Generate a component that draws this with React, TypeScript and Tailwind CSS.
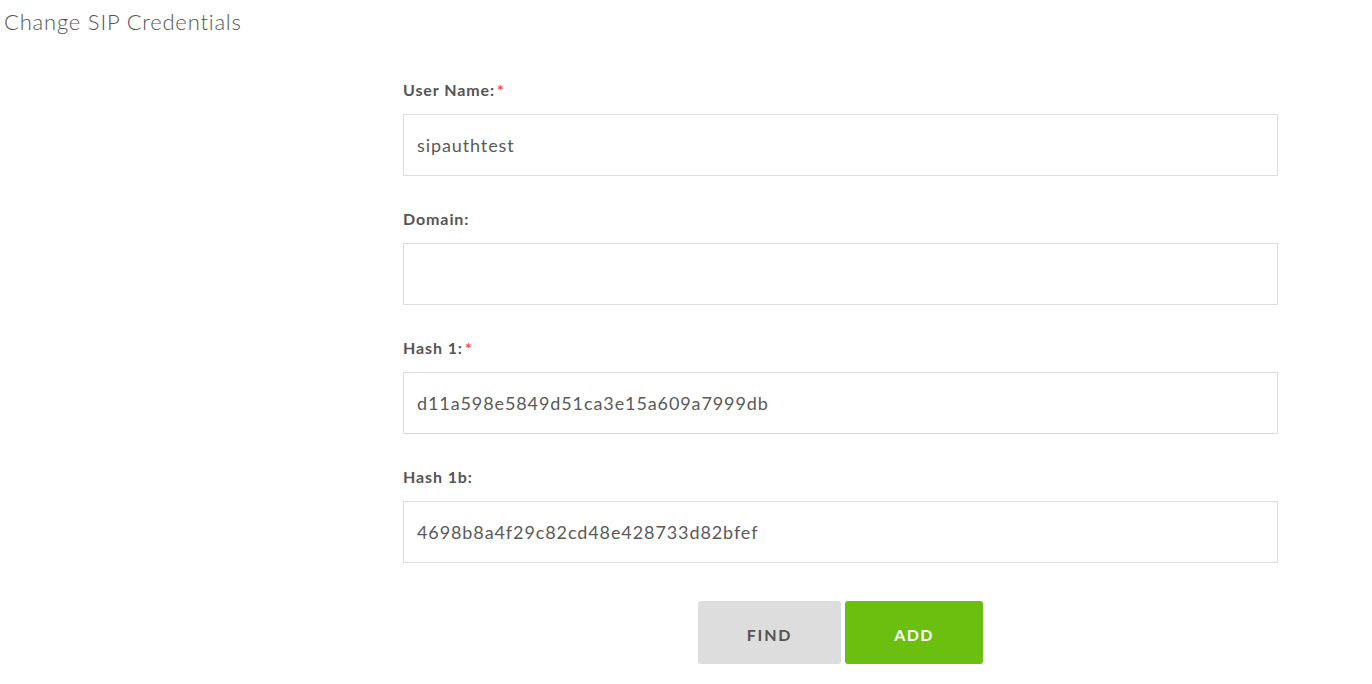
const fields = [
  { label: 'User Name:', required: true, value: 'sipauthtest' },
  { label: 'Domain:', required: false, value: '' },
  { label: 'Hash 1:', required: true, value: 'd11a598e5849d51ca3e15a609a7999db' },
  { label: 'Hash 1b:', required: false, value: '4698b8a4f29c82cd48e428733d82bfef' },
]

export default function App() {
  return (
    <div className="min-h-screen bg-white font-['Lato',sans-serif] text-[#555]">
      <h1 className="pl-[4px] pt-[8px] text-[22px] leading-[28px] font-light tracking-[0.8px] text-[#555]">
        Change SIP Credentials
      </h1>
      <form className="ml-[403px] w-[875px] pt-[44px]" onSubmit={(e) => e.preventDefault()}>
        {fields.map((f) => (
          <div key={f.label} className="mb-[33px]">
            <label className="block text-[16px] leading-[20px] font-bold tracking-[0.9px] text-[#555] mb-[14px]">
              {f.label}
              {f.required && <span className="ml-[2px] text-[#e8502d]">*</span>}
            </label>
            <input
              defaultValue={f.value}
              className="block w-full h-[62px] border border-[#dedede] px-[13px] text-[18px] tracking-[0.9px] text-[#5a5a5a] outline-none"
            />
          </div>
        ))}
        <div className="flex justify-center gap-[4px] pt-[5px]">
          <button
            type="button"
            className="w-[143px] h-[63px] pt-[5px] rounded-[3px] bg-[#dddddd] text-[16px] font-bold tracking-[1.8px] text-[#555]"
          >
            FIND
          </button>
          <button
            type="submit"
            className="w-[138px] h-[63px] pt-[5px] rounded-[3px] bg-[#6abf0f] text-[16px] font-bold tracking-[1.3px] text-white"
          >
            ADD
          </button>
        </div>
      </form>
    </div>
  )
}
